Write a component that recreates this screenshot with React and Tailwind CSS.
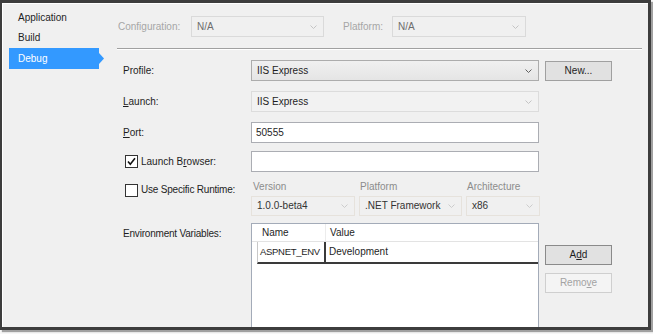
import React from "react";

function Chevron({ color }) {
  return (
    <svg width="7" height="4" viewBox="0 0 7 4" className="shrink-0">
      <path d="M0.5 0.5 L3.5 3.5 L6.5 0.5" fill="none" stroke={color} strokeWidth="1" />
    </svg>
  );
}

function Drop({ text, box, textCls, chev }) {
  return (
    <div className={`flex items-center justify-between h-full pl-[5px] pr-[6px] border ${box}`}>
      <span className={textCls}>{text}</span>
      <Chevron color={chev} />
    </div>
  );
}

function Check({ checked }) {
  return (
    <div className="w-[13px] h-[13px] border border-[#333333] bg-white flex items-center justify-center shrink-0">
      {checked && (
        <svg width="11" height="11" viewBox="0 0 11 11">
          <path d="M2 5.5 L4.3 8.2 L9 2.2" fill="none" stroke="#111111" strokeWidth="1.6" />
        </svg>
      )}
    </div>
  );
}

function Btn({ children, cls }) {
  return (
    <div className={`w-[67px] h-[20px] border flex items-center justify-center ${cls}`}>{children}</div>
  );
}

export default function App() {
  return (
    <div className="w-[653px] h-[334px] bg-[#f7f7f7] overflow-hidden text-[10px] leading-[14px] text-[#1e1e1e] font-['Liberation_Sans',Arial,sans-serif]">
      <div className="w-[651px] h-[330px] border-t-[3px] border-l-2 border-r-[3px] border-b-[3px] border-[#3d3d3d] shadow-[2px_2px_1px_rgba(0,0,0,0.35)] bg-[#f0f0f0]">
        <div className="h-full border-t border-l border-white flex overflow-hidden">
          {/* Sidebar */}
          <div className="w-[104px] shrink-0 pt-[4px] flex flex-col">
            <div className="h-[20px] shrink-0 pl-[15px] flex items-center">Application</div>
            <div className="h-[20px] shrink-0 pl-[15px] flex items-center">Build</div>
            <div className="relative shrink-0 ml-[6px] w-[90px] h-[21px] bg-[#3399ff] text-white pl-[9px] flex items-center">
              Debug
              <svg width="5" height="11" viewBox="0 0 5 11" className="absolute left-full top-[5px]">
                <polygon points="0,0 5,5.5 0,11" fill="#3399ff" />
              </svg>
            </div>
          </div>

          {/* Main */}
          <div className="flex-1 flex flex-col pr-[6px] min-w-0">
            <div className="pt-[12px] pl-[11px] flex items-center h-[33px] shrink-0">
              <span className="w-[73px] text-[#a6a6a6]">Configuration:</span>
              <div className="w-[133px] h-[21px]">
                <Drop text="N/A" box="border-[#dadada] bg-[#f0f0f0]" textCls="text-[#6d6d6d]" chev="#c4c4c4" />
              </div>
              <span className="ml-[19px] w-[49px] text-[#a6a6a6]">Platform:</span>
              <div className="w-[134px] h-[21px]">
                <Drop text="N/A" box="border-[#dadada] bg-[#f0f0f0]" textCls="text-[#6d6d6d]" chev="#c4c4c4" />
              </div>
            </div>
            <div className="mt-[11px] ml-[10px] h-[2px] shrink-0 border-t border-[#a0a0a0] border-b border-b-white" />

            <div className="pl-[16px] mt-[10px] flex flex-col flex-1 min-h-0">
              {/* Profile */}
              <div className="flex items-center h-[21px] shrink-0">
                <span className="w-[128px]">Profile:</span>
                <div className="w-[288px] h-full">
                  <Drop text="IIS Express" box="border-[#acacac] bg-gradient-to-b from-[#f0f0f0] to-[#e5e5e5]" textCls="" chev="#606060" />
                </div>
                <div className="ml-[6px]">
                  <Btn cls="border-[#a0a0a0] bg-[#e1e1e1]">New...</Btn>
                </div>
              </div>

              {/* Launch */}
              <div className="flex items-center h-[21px] mt-[10px] shrink-0">
                <span className="w-[128px]"><span className="underline">L</span>aunch:</span>
                <div className="w-[288px] h-full">
                  <Drop text="IIS Express" box="border-[#dcdcdc] bg-[#f2f2f2]" textCls="" chev="#c4c4c4" />
                </div>
              </div>

              {/* Port */}
              <div className="flex items-center h-[21px] mt-[10px] shrink-0">
                <span className="w-[128px]"><span className="underline">P</span>ort:</span>
                <div className="w-[288px] h-full border border-[#abadb3] bg-white pl-[4px] flex items-center">50555</div>
              </div>

              {/* Launch Browser */}
              <div className="flex items-center h-[21px] mt-[8px] shrink-0">
                <div className="w-[128px] flex items-center pl-[2px]">
                  <Check checked />
                  <span className="ml-[3px]">Launch B<span className="underline">r</span>owser:</span>
                </div>
                <div className="w-[288px] h-full border border-[#abadb3] bg-white" />
              </div>

              {/* Runtime */}
              <div className="flex mt-[8px] shrink-0">
                <div className="w-[128px] flex items-center pl-[2px] pt-[3px] self-start">
                  <Check />
                  <span className="ml-[3px] tracking-[-0.2px]">Use Specific Runtime:</span>
                </div>
                <div className="flex">
                  <div className="w-[104px] flex flex-col">
                    <span className="h-[16px] leading-[14px] pl-[2px] text-[#8c8c8c]">Version</span>
                    <div className="h-[20px]">
                      <Drop text="1.0.0-beta4" box="border-[#e6e2dc] bg-[#f0f0f0]" textCls="text-[#333333]" chev="#cccccc" />
                    </div>
                  </div>
                  <div className="w-[103px] ml-[4px] flex flex-col">
                    <span className="h-[16px] leading-[14px] pl-[1px] text-[#8c8c8c]">Platform</span>
                    <div className="h-[20px]">
                      <Drop text=".NET Framework" box="border-[#e6e2dc] bg-[#f0f0f0]" textCls="text-[#333333]" chev="#cccccc" />
                    </div>
                  </div>
                  <div className="w-[74px] ml-[4px] flex flex-col">
                    <span className="h-[16px] leading-[14px] pl-[1px] text-[#8c8c8c]">Architecture</span>
                    <div className="h-[20px]">
                      <Drop text="x86" box="border-[#e6e2dc] bg-[#f0f0f0]" textCls="text-[#333333]" chev="#cccccc" />
                    </div>
                  </div>
                </div>
              </div>

              {/* Environment Variables */}
              <div className="flex mt-[7px] shrink-0">
                <span className="w-[128px] pt-[4px] tracking-[-0.2px]">Environment Variables:</span>
                <div className="w-[288px] h-[130px] border border-[#a3abb8] bg-white flex flex-col">
                  <div className="flex h-[18px] border-b border-[#e3e3e3]">
                    <div className="w-[5px]" />
                    <div className="w-[69px] pl-[5px] flex items-center border-r border-[#ececec]">Name</div>
                    <div className="flex-1 pl-[4px] flex items-center">Value</div>
                  </div>
                  <div className="flex h-[22px]">
                    <div className="w-[5px]" />
                    <div className="flex flex-1 border-l border-[#c8c8c8] border-b-2 border-b-[#3a3a3a]">
                      <div className="w-[68px] pl-[2px] flex items-center border-r-2 border-[#3a3a3a] text-[9.5px] tracking-[-0.3px] whitespace-nowrap overflow-hidden">ASPNET_ENV</div>
                      <div className="flex-1 pl-[3px] flex items-center">Development</div>
                    </div>
                  </div>
                </div>
                <div className="ml-[6px] pt-[22px] flex flex-col gap-[8px]">
                  <Btn cls="border-[#8a8a8a] bg-[#e1e1e1]">A<span className="underline">d</span>d</Btn>
                  <Btn cls="border-[#cfcfcf] bg-[#f4f4f4] text-[#a3a3a3]">Remo<span className="underline">v</span>e</Btn>
                </div>
              </div>
            </div>
          </div>
        </div>
      </div>
    </div>
  );
}
